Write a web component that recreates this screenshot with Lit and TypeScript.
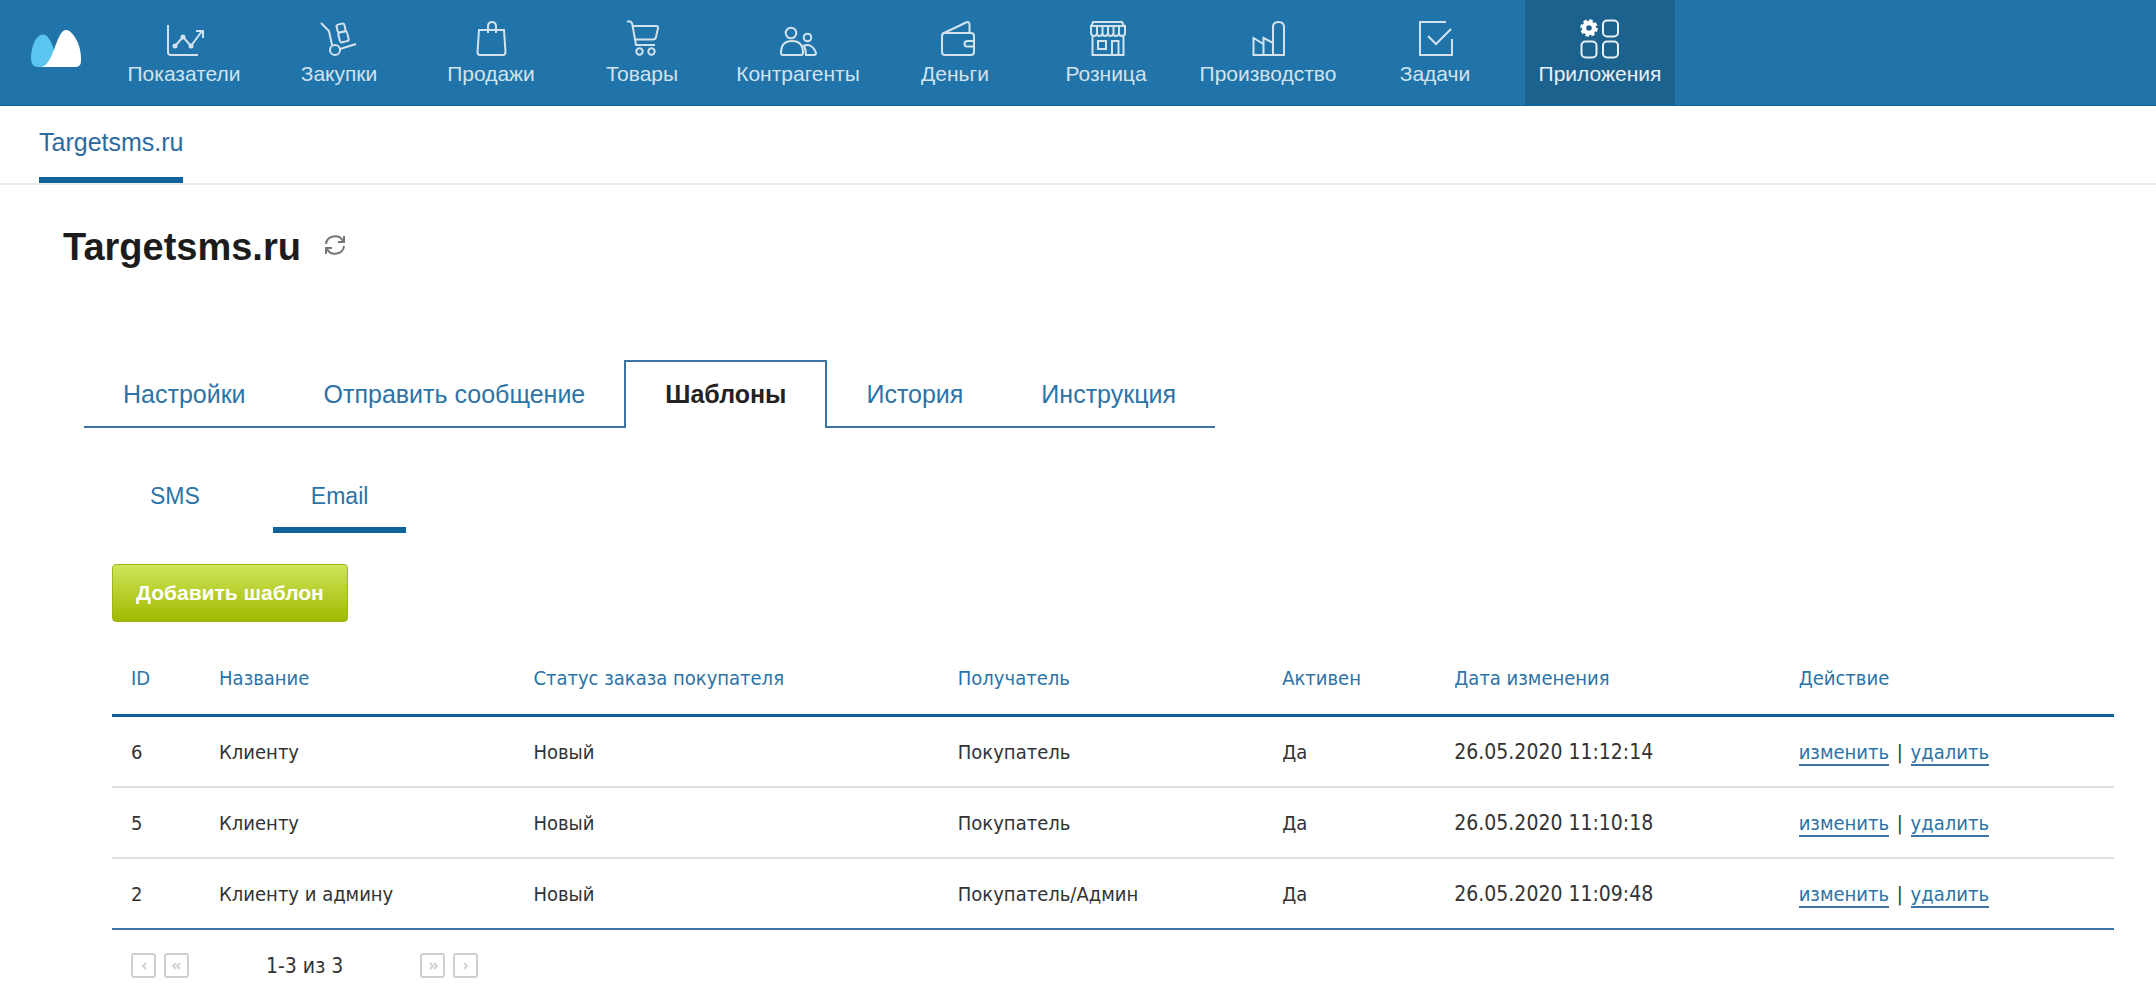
import { LitElement, html, svg, css, TemplateResult } from "lit";
import { customElement, state } from "lit/decorators.js";
import { classMap } from "lit/directives/class-map.js";

interface NavItem {
  label: string;
  icon: TemplateResult;
}

const NAV: NavItem[] = [
  {
    label: "Показатели",
    icon: svg`<path d="M6 7V34Q6 37 9 37H36M13 28L21 19L29 28L40 13M34 13H41V20"/>
      <g class="solid"><circle cx="13" cy="28" r="1.500"/><circle cx="21" cy="19" r="1.500"/><circle cx="29" cy="28" r="1.500"/></g>`,
  },
  {
    label: "Закупки",
    icon: svg`<path d="M4 5L12 13L15 27M23 31L39 26"/><circle cx="18" cy="32" r="5"/>
      <rect x="20" y="6" width="8" height="8" rx="2" transform="rotate(-14 24 10)"/>
      <rect x="22" y="14" width="9" height="10" rx="2" transform="rotate(-14 26 19)"/>`,
  },
  {
    label: "Продажи",
    icon: svg`<path d="M10 12H35L36.500 34Q36.500 37 34 37H11Q8.500 37 8.500 34ZM19 15V8.500Q19 4 23 4T27 8.500V15"/>`,
  },
  {
    label: "Товары",
    icon: svg`<path d="M7 3.500H10Q12 4 12.500 7L16 27H35M13 8H36Q38.500 8 38 10L36 19Q35.500 21.500 33 21.500H15"/>
      <circle cx="19.500" cy="33.500" r="3.200"/><circle cx="31.500" cy="33.500" r="3.200"/>`,
  },
  {
    label: "Контрагенты",
    icon: svg`<circle cx="15" cy="15" r="5.300"/><circle cx="31.500" cy="19.500" r="3.800"/>
      <path d="M5 35Q5 23 16 23T27 35Q27 37 25 37H7Q5 37 5 35ZM28 27.500Q31 26.500 34 27.500Q38.500 30 40 35Q40 37 38 37H30Q30 32 28 27.500Z"/>`,
  },
  {
    label: "Деньги",
    icon: svg`<rect x="9" y="15" width="32" height="22" rx="3"/>
      <path d="M10 15.500L33 4.500Q36 3 36.500 6V15M41 23H34Q31.500 23.500 31.500 26T34 28.500H41"/>`,
  },
  {
    label: "Розница",
    icon: svg`<path d="M7.500 8L9 4H38L40 8M7 8H41V15Q41 18 38 18T35 15Q35 18 32 18T29.500 15Q29 18 26.500 18T24 15Q23.500 18 21 18T18.500 15Q18 18 15.500 18T13 15Q12.500 18 10 18T7 15ZM13 8V16M18.500 8V16M24 8V16M29.500 8V16M35 8V16M8.500 18V37H39.500V18M28 37V23H34.500V37"/>
      <rect x="14" y="23" width="8" height="8"/>`,
  },
  {
    label: "Производство",
    icon: svg`<path d="M7.500 37V20L17.500 26V20L27 25V9Q27 4 32.500 4T38 9V37ZM17.500 26V37M27 25V37"/>`,
  },
  {
    label: "Задачи",
    icon: svg`<path d="M33 4H7V37H39V21M15 18L23 26L38 11"/>`,
  },
  {
    label: "Приложения",
    icon: svg`<g stroke="#fff"><circle cx="11" cy="10" r="5" stroke-width="4.400"/>
      <circle cx="11" cy="10" r="7.400" stroke-width="2.800" stroke-dasharray="3.400 2.410"/></g>
      <rect x="25" y="2.500" width="15" height="16" rx="4"/>
      <rect x="3.500" y="23.500" width="15" height="16" rx="4"/>
      <rect x="25" y="23.500" width="15" height="16" rx="4"/>`,
  },
];

const TABS = ["Настройки", "Отправить сообщение", "Шаблоны", "История", "Инструкция"];
const CHANNELS = ["SMS", "Email"];
const COLUMNS = ["ID", "Название", "Статус заказа покупателя", "Получатель", "Активен", "Дата изменения", "Действие"];
const ROWS = [
  { id: "6", name: "Клиенту", status: "Новый", to: "Покупатель", active: "Да", date: "26.05.2020 11:12:14" },
  { id: "5", name: "Клиенту", status: "Новый", to: "Покупатель", active: "Да", date: "26.05.2020 11:10:18" },
  { id: "2", name: "Клиенту и админу", status: "Новый", to: "Покупатель/Админ", active: "Да", date: "26.05.2020 11:09:48" },
];

@customElement("top-nav")
class TopNav extends LitElement {
  @state() private current = "Приложения";

  static styles = css`
    :host {
      display: block;
      background: #2074a9;
      font-family: "Liberation Sans", Arial, sans-serif;
    }
    .bar {
      display: flex;
      gap: 24px;
      padding-left: 31px;
      border-bottom: 1px solid #0f669e;
    }
    .logo {
      display: block;
      padding-top: 30px;
    }
    .logo svg {
      display: block;
    }
    nav {
      display: grid;
      grid-template-columns: 158px 152px 152px 150px 162px 152px 150px 174px 160px 170px;
      justify-items: center;
    }
    a {
      text-decoration: none;
    }
    .item {
      box-sizing: border-box;
      width: 150px;
      height: 105px;
      padding-top: 18px;
      display: flex;
      flex-direction: column;
      align-items: center;
      font-size: 21px;
      line-height: 24px;
      color: #d2e3ee;
    }
    .item svg {
      display: block;
      fill: none;
      stroke: currentColor;
      stroke-width: 2;
    }
    .item .solid {
      fill: currentColor;
    }
    .current {
      background: #1b628e;
      color: #e8f0f5;
    }
  `;

  render() {
    return html`
      <header class="bar">
        <a class="logo" href="#" aria-label="МойСклад">
          <svg width="50" height="37" viewBox="0 0 50 37">
            <path fill="#5bc5f2" d="M12 4.500C5 4.500 0 17 0 28Q0 37 7 37H16L23 20C20 10 16 4.500 12 4.500Z" />
            <path fill="#fff" d="M35 0C41 0 50 13 50 28V31Q50 37 44 37H9C15 37 18 31 21 24.500C26 13 29 0 35 0Z" />
          </svg>
        </a>
        <nav>
          ${NAV.map(
            (n) => html`<a
              href="#"
              class=${classMap({ item: true, current: n.label === this.current })}
              @click=${() => (this.current = n.label)}
            >
              <svg width="44" height="44" viewBox="0 0 44 44" aria-hidden="true">${n.icon}</svg>
              ${n.label}
            </a>`
          )}
        </nav>
      </header>
    `;
  }
}

@customElement("template-table")
class TemplateTable extends LitElement {
  static styles = css`
    :host {
      display: block;
      font-family: "DejaVu Sans Condensed", "Noto Sans", sans-serif;
      font-size: 20px;
      line-height: 24px;
      color: #333;
    }
    table {
      width: 100%;
      table-layout: fixed;
      border-collapse: separate;
      border-spacing: 0;
      border-bottom: 2px solid #3b73a5;
    }
    th,
    td {
      box-sizing: border-box;
      text-align: left;
      white-space: nowrap;
      font-weight: 400;
      padding: 23px 0 22px 19px;
    }
    th {
      padding: 44px 0 24px 19px;
      color: #2c73a6;
      border-bottom: 3px solid #10629a;
    }
    tr + tr td {
      border-top: 2px solid #dedede;
    }
    .c0 { width: 4.4%; }
    .c1 { width: 15.7%; }
    .c2 { width: 21.2%; }
    .c3 { width: 16.2%; }
    .c4 { width: 8.6%; }
    .c5 { width: 17.2%; }
    .num {
      font-size: 21px;
    }
    td a {
      color: #2c73a6;
      text-decoration: none;
      border-bottom: 2px solid #3b73a5;
    }
    .sep {
      margin: 0 2px;
    }
    .pager {
      display: flex;
      align-items: center;
      gap: 8px;
      margin-top: 23px;
      padding-left: 19px;
    }
    .range {
      margin: 0 69px;
    }
    button {
      box-sizing: border-box;
      width: 25px;
      height: 25px;
      padding: 0;
      display: grid;
      place-items: center;
      background: #fff;
      border: 2px solid #cfcfcf;
      border-radius: 3px;
    }
    button svg {
      fill: none;
      stroke: #d2d2d2;
      stroke-width: 2;
    }
  `;

  private pageButton(label: string, d: string) {
    return html`<button aria-label=${label}>
      <svg width="12" height="8" viewBox="0 0 12 8"><path d=${d} /></svg>
    </button>`;
  }

  render() {
    return html`
      <table>
        <thead>
          <tr>
            ${COLUMNS.map((c, i) => html`<th class="c${i}" scope="col">${c}</th>`)}
          </tr>
        </thead>
        <tbody>
          ${ROWS.map(
            (r) => html`<tr>
              <td>${r.id}</td>
              <td>${r.name}</td>
              <td>${r.status}</td>
              <td>${r.to}</td>
              <td>${r.active}</td>
              <td class="num">${r.date}</td>
              <td><a href="#">изменить</a> <span class="sep">|</span> <a href="#">удалить</a></td>
            </tr>`
          )}
        </tbody>
      </table>
      <div class="pager">
        ${this.pageButton("Назад", "M8 1L5 4L8 7")}
        ${this.pageButton("В начало", "M5 1L2 4L5 7M9 1L6 4L9 7")}
        <span class="range num">1-3 из 3</span>
        ${this.pageButton("В конец", "M3 1L6 4L3 7M7 1L10 4L7 7")}
        ${this.pageButton("Вперёд", "M4 1L7 4L4 7")}
      </div>
    `;
  }
}

@customElement("app-root")
class AppRoot extends LitElement {
  @state() private tab = "Шаблоны";
  @state() private channel = "Email";

  static styles = css`
    :host {
      display: block;
      min-height: 100vh;
      background: #fff;
      font-family: "Liberation Sans", Arial, sans-serif;
      color: #1c1c1c;
    }
    a {
      text-decoration: none;
    }
    .subbar {
      display: flex;
      padding-left: 39px;
      border-bottom: 2px solid #ebebeb;
    }
    .subbar a {
      padding: 22px 0 21px;
      border-bottom: 6px solid #10629a;
      font-size: 25px;
      line-height: 28px;
      color: #2c6ba0;
    }
    .title {
      display: flex;
      align-items: center;
      gap: 22px;
      padding: 40px 63px 0;
    }
    h1 {
      margin: 0;
      font-size: 38px;
      line-height: 44px;
    }
    .refresh {
      border: 0;
      padding: 0 0 4px;
      background: none;
      display: flex;
    }
    .refresh svg {
      fill: none;
      stroke: #757575;
      stroke-width: 2;
    }
    .tabs {
      display: flex;
      margin-top: 91px;
      padding-left: 84px;
    }
    .tab {
      padding: 20px 39px 18px;
      border-bottom: 2px solid #3b73a5;
      font-size: 25px;
      line-height: 28px;
      color: #2c73a6;
    }
    .open {
      padding: 18px 39px 20px;
      border: 2px solid #3b73a5;
      border-bottom: 0;
      font-weight: 700;
      color: #222;
    }
    .content {
      padding: 54px 42px 0 112px;
    }
    .channels {
      display: flex;
      gap: 35px;
    }
    .channel {
      padding: 0 38px 17px;
      border-bottom: 6px solid transparent;
      font-size: 23px;
      line-height: 28px;
      color: #2c73a6;
    }
    .picked {
      border-color: #10629a;
    }
    .add {
      display: block;
      height: 58px;
      margin-top: 31px;
      padding: 0 23px;
      border: 1px solid #9db515;
      border-radius: 4px;
      background: linear-gradient(#cfe45a, #a0ba00);
      font: 700 21px/24px "Liberation Sans", Arial, sans-serif;
      color: #fff;
    }
  `;

  render() {
    return html`
      <top-nav></top-nav>
      <div class="subbar"><a href="#">Targetsms.ru</a></div>
      <div class="title">
        <h1>Targetsms.ru</h1>
        <button class="refresh" aria-label="Обновить">
          <svg width="24" height="22" viewBox="0 0 24 22">
            <path d="M3 10A9 8.500 0 0 1 20 7M21 2V8H15M21 12A9 8.500 0 0 1 4 15M3 20V14H9" />
          </svg>
        </button>
      </div>
      <nav class="tabs">
        ${TABS.map(
          (t) => html`<a href="#" class=${classMap({ tab: true, open: t === this.tab })} @click=${() => (this.tab = t)}>${t}</a>`
        )}
      </nav>
      <main class="content">
        <nav class="channels">
          ${CHANNELS.map(
            (c) => html`<a
              href="#"
              class=${classMap({ channel: true, picked: c === this.channel })}
              @click=${() => (this.channel = c)}
              >${c}</a
            >`
          )}
        </nav>
        <button class="add">Добавить шаблон</button>
        <template-table></template-table>
      </main>
    `;
  }
}
